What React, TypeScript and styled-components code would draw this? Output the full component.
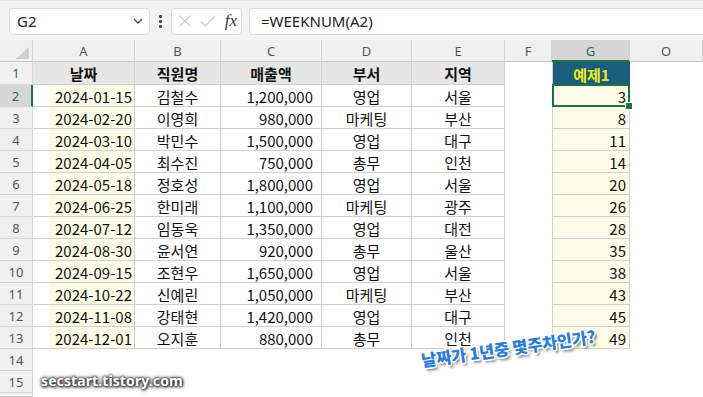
import styled, { createGlobalStyle, css } from "styled-components";

interface RowData {
  date: string;
  name: string;
  amount: string;
  dept: string;
  region: string;
  week: number;
}

const rows: RowData[] = [
  { date: "2024-01-15", name: "김철수", amount: "1,200,000", dept: "영업", region: "서울", week: 3 },
  { date: "2024-02-20", name: "이영희", amount: "980,000", dept: "마케팅", region: "부산", week: 8 },
  { date: "2024-03-10", name: "박민수", amount: "1,500,000", dept: "영업", region: "대구", week: 11 },
  { date: "2024-04-05", name: "최수진", amount: "750,000", dept: "총무", region: "인천", week: 14 },
  { date: "2024-05-18", name: "정호성", amount: "1,800,000", dept: "영업", region: "서울", week: 20 },
  { date: "2024-06-25", name: "한미래", amount: "1,100,000", dept: "마케팅", region: "광주", week: 26 },
  { date: "2024-07-12", name: "임동욱", amount: "1,350,000", dept: "영업", region: "대전", week: 28 },
  { date: "2024-08-30", name: "윤서연", amount: "920,000", dept: "총무", region: "울산", week: 35 },
  { date: "2024-09-15", name: "조현우", amount: "1,650,000", dept: "영업", region: "서울", week: 38 },
  { date: "2024-10-22", name: "신예린", amount: "1,050,000", dept: "마케팅", region: "부산", week: 43 },
  { date: "2024-11-08", name: "강태현", amount: "1,420,000", dept: "영업", region: "대구", week: 45 },
  { date: "2024-12-01", name: "오지훈", amount: "880,000", dept: "총무", region: "인천", week: 49 },
];

const columns = ["A", "B", "C", "D", "E", "F", "G", "O"];
const headers = ["날짜", "직원명", "매출액", "부서", "지역"];

const GlobalStyle = createGlobalStyle`
  html, body {
    margin: 0;
    padding: 0;
    background: #fff;
  }
  * {
    box-sizing: border-box;
  }
`;

const Page = styled.div`
  position: relative;
  width: 703px;
  height: 397px;
  overflow: hidden;
  background: #fff;
  font-family: "Noto Sans", "Open Sans", sans-serif;
`;

const FormulaBar = styled.div`
  display: flex;
  align-items: center;
  height: 40px;
  padding: 7px 0 6px 9px;
  background: #f3f3f3;
  border-top: 1px solid #e4e4e4;
`;

const Box = styled.div`
  display: flex;
  align-items: center;
  height: 27px;
  background: #fff;
  border: 1px solid #dadada;
  border-radius: 4px;
`;

const NameBox = styled(Box)`
  width: 141px;
  padding: 0 6px 0 7px;
  justify-content: space-between;
  font-size: 15px;
  color: #222;
`;

const Dots = styled.div`
  display: flex;
  flex-direction: column;
  gap: 2px;
  margin: 0 9px 0 9px;
  span {
    width: 3px;
    height: 3px;
    background: #444;
    border-radius: 1px;
  }
`;

const FxBox = styled(Box)`
  width: 71px;
  padding: 0 4px 0 6px;
  gap: 8px;
`;

const Fx = styled.span`
  font-family: "Liberation Serif", "DejaVu Serif", serif;
  font-style: italic;
  font-size: 17px;
  color: #333;
  margin-left: 1px;
`;

const FormulaInput = styled(Box)`
  flex: 1;
  margin-left: 7px;
  padding-left: 11px;
  border-right: none;
  border-radius: 4px 0 0 4px;
  font-size: 15px;
  color: #222;
`;

const Sheet = styled.div`
  display: grid;
  grid-template-columns: 33px 102px 86px 101px 90px 93px 47px 78px 73px;
  grid-template-rows: 22px 23px repeat(14, 22px) 4px;
`;

const Corner = styled.div`
  position: relative;
  background: #f0f0f0;
  border-right: 1px solid #d4d4d4;
  border-bottom: 1px solid #c8c8c8;
  svg {
    position: absolute;
    right: 3px;
    bottom: 2px;
  }
`;

const ColHeader = styled.div<{ $active?: boolean }>`
  display: flex;
  align-items: center;
  justify-content: center;
  font-size: 13px;
  color: ${(p) => (p.$active ? "#1e7145" : "#555")};
  background: ${(p) => (p.$active ? "#d6d6d6" : "#f0f0f0")};
  border-right: 1px solid #d4d4d4;
  border-bottom: ${(p) => (p.$active ? "2px solid #1e7145" : "1px solid #c8c8c8")};
  padding-top: ${(p) => (p.$active ? "1px" : "0")};
`;

const RowHeader = styled.div<{ $active?: boolean }>`
  display: flex;
  align-items: center;
  justify-content: center;
  font-size: 13px;
  color: ${(p) => (p.$active ? "#1e7145" : "#555")};
  background: ${(p) => (p.$active ? "#d6d6d6" : "#f0f0f0")};
  border-bottom: 1px solid #d4d4d4;
  border-right: ${(p) => (p.$active ? "2px solid #1e7145" : "1px solid #d4d4d4")};
`;

type Align = "left" | "center" | "right";

const Cell = styled.div<{
  $align?: Align;
  $fill?: string;
  $grid?: boolean;
  $leftLine?: boolean;
  $bold?: boolean;
  $pr?: number;
  $color?: string;
}>`
  display: flex;
  align-items: center;
  justify-content: ${(p) =>
    p.$align === "right" ? "flex-end" : p.$align === "center" ? "center" : "flex-start"};
  padding-right: ${(p) => p.$pr ?? 3}px;
  padding-top: 1px;
  font-family: "Noto Sans CJK KR", "Noto Sans", sans-serif;
  font-size: 15px;
  font-weight: ${(p) => (p.$bold ? 700 : 400)};
  color: ${(p) => p.$color ?? "#111"};
  background: ${(p) => p.$fill ?? "#fff"};
  white-space: nowrap;
  ${(p) =>
    p.$grid &&
    css`
      border-right: 1px solid #d0d0d0;
      border-bottom: 1px solid #d0d0d0;
    `}
  ${(p) =>
    p.$leftLine &&
    css`
      border-left: 1px solid #d0d0d0;
    `}
`;

const DateCell = styled(Cell)`
  background: linear-gradient(to right, #fff 16px, #fdfde7 16px);
`;

const ActiveCell = styled(Cell)`
  position: relative;
  &::before {
    content: "";
    position: absolute;
    inset: -1px -1px -1px -1px;
    border: 2px solid #1e7145;
  }
  &::after {
    content: "";
    position: absolute;
    right: -4px;
    bottom: -4px;
    width: 6px;
    height: 6px;
    background: #1e7145;
    border: 1px solid #fff;
  }
`;

const Caption = styled.div`
  position: absolute;
  left: 423px;
  top: 348px;
  transform: rotate(-8deg);
  transform-origin: left bottom;
  font-family: "Noto Sans CJK KR", sans-serif;
  font-size: 16.5px;
  font-weight: 900;
  color: #2b7cd2;
  letter-spacing: -0.2px;
  text-shadow:
    1.5px 0 0 #fff, -1.5px 0 0 #fff, 0 1.5px 0 #fff, 0 -1.5px 0 #fff,
    1px 1px 0 #fff, -1px -1px 0 #fff, 1px -1px 0 #fff, -1px 1px 0 #fff,
    2px 3px 3px rgba(0, 0, 0, 0.6);
  white-space: nowrap;
`;

const Watermark = styled.div`
  position: absolute;
  left: 41px;
  top: 371px;
  font-family: "Noto Sans", "Open Sans", sans-serif;
  font-size: 14px;
  font-weight: 700;
  color: #fff;
  letter-spacing: 0.1px;
  text-shadow:
    0 0 2px #333, 0 0 3px #333, 1px 1px 3px #222, 0 0 5px rgba(0, 0, 0, 0.6);
`;

const YELLOW = "#fdfde7";

function App() {
  return (
    <Page>
      <GlobalStyle />
      <FormulaBar>
        <NameBox>
          <span>G2</span>
          <svg width="10" height="6" viewBox="0 0 10 6">
            <path d="M1 1 L5 5 L9 1" fill="none" stroke="#444" strokeWidth="1.3" />
          </svg>
        </NameBox>
        <Dots>
          <span />
          <span />
          <span />
        </Dots>
        <FxBox>
          <svg width="14" height="14" viewBox="0 0 14 14">
            <path d="M1.5 1.5 L12.5 12.5 M12.5 1.5 L1.5 12.5" stroke="#c4c4c4" strokeWidth="1.2" />
          </svg>
          <svg width="16" height="14" viewBox="0 0 16 14">
            <path d="M1 7.5 L5.5 12 L15 2" fill="none" stroke="#c4c4c4" strokeWidth="1.2" />
          </svg>
          <Fx>fx</Fx>
        </FxBox>
        <FormulaInput>=WEEKNUM(A2)</FormulaInput>
      </FormulaBar>

      <Sheet>
        <Corner>
          <svg width="13" height="12" viewBox="0 0 13 12">
            <path d="M13 0 L13 12 L0 12 Z" fill="#cfcfcf" />
          </svg>
        </Corner>
        {columns.map((c) => (
          <ColHeader key={c} $active={c === "G"}>
            {c}
          </ColHeader>
        ))}

        <RowHeader>1</RowHeader>
        {headers.map((h) => (
          <Cell key={h} $align="center" $grid $bold $fill="#e6e6e6" $pr={0}>
            {h}
          </Cell>
        ))}
        <Cell />
        <Cell $align="center" $bold $fill="#1a5e7c" $color="#f2ea1c" $pr={0} $leftLine>
          예제1
        </Cell>
        <Cell />

        {rows.map((r, i) => {
          const rowNum = i + 2;
          const WeekCell = rowNum === 2 ? ActiveCell : Cell;
          return [
            <RowHeader key={`h${rowNum}`} $active={rowNum === 2}>
              {rowNum}
            </RowHeader>,
            <DateCell key={`a${rowNum}`} $align="right" $grid $pr={2}>
              {r.date}
            </DateCell>,
            <Cell key={`b${rowNum}`} $align="center" $grid $pr={0}>
              {r.name}
            </Cell>,
            <Cell key={`c${rowNum}`} $align="right" $grid $pr={8}>
              {r.amount}
            </Cell>,
            <Cell key={`d${rowNum}`} $align="center" $grid $pr={0}>
              {r.dept}
            </Cell>,
            <Cell key={`e${rowNum}`} $align="center" $grid $pr={0}>
              {r.region}
            </Cell>,
            <Cell key={`f${rowNum}`} />,
            <WeekCell key={`g${rowNum}`} $align="right" $grid $leftLine $fill={YELLOW} $pr={3}>
              {r.week}
            </WeekCell>,
            <Cell key={`o${rowNum}`} />,
          ];
        })}

        {[14, 15].map((n) => [
          <RowHeader key={`h${n}`}>{n}</RowHeader>,
          ...columns.map((c) => <Cell key={`${c}${n}`} />),
        ])}
        <RowHeader />
        {columns.map((c) => (
          <Cell key={`${c}16`} />
        ))}
      </Sheet>

      <Caption>날짜가 1년중 몇주차인가?</Caption>
      <Watermark>secstart.tistory.com</Watermark>
    </Page>
  );
}

export default App;
